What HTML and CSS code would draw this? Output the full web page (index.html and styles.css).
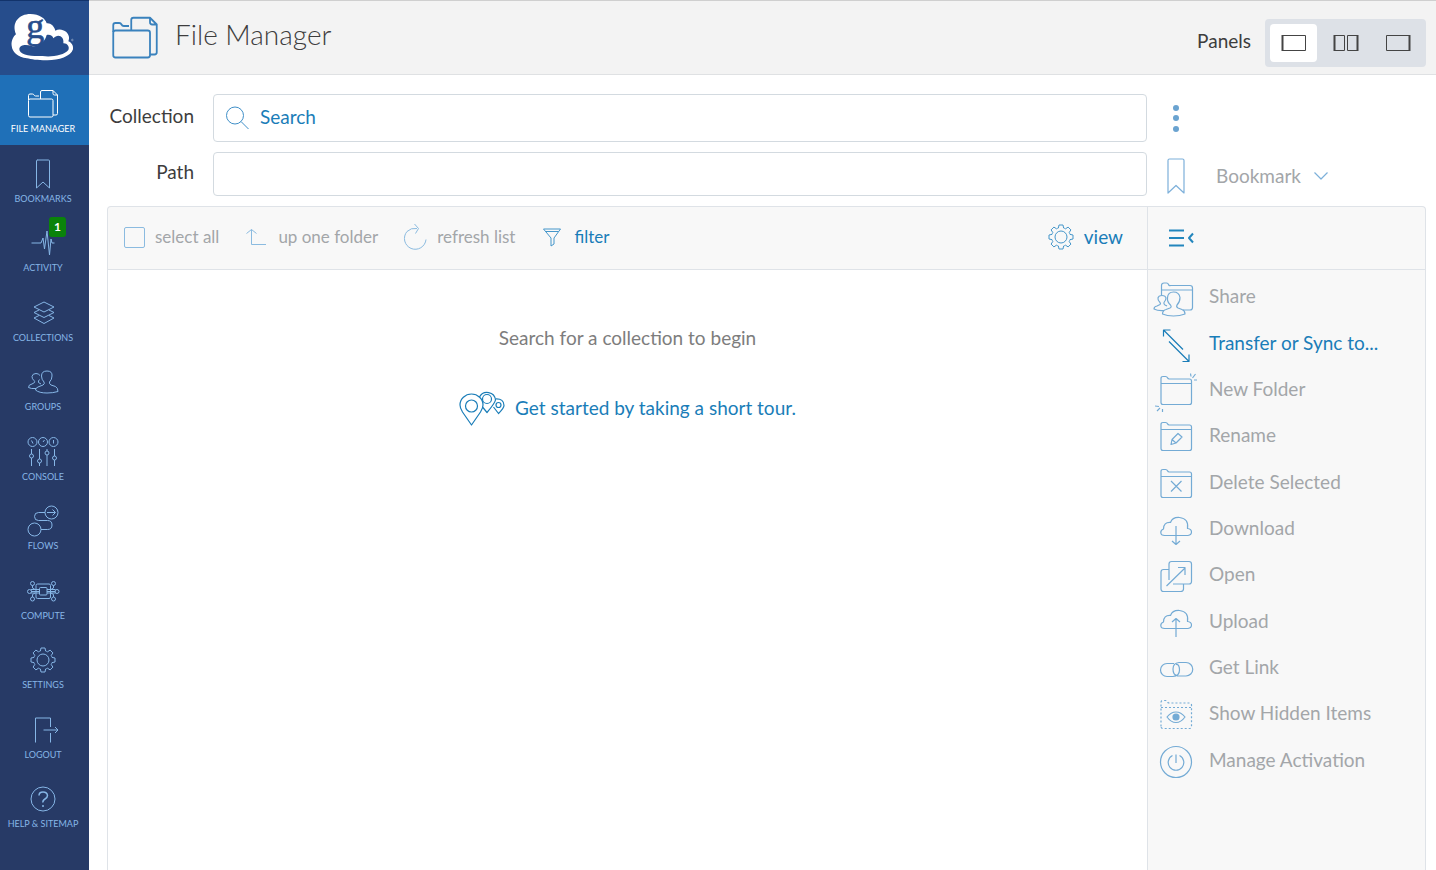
FILE: index.html
```html
<!DOCTYPE html>
<html lang="en">
<head>
    <meta charset="UTF-8">
    <meta name="viewport" content="width=device-width, initial-scale=1.0">
    <title>File Manager</title>
    <link rel="stylesheet" href="styles.css">
</head>
<body>
    <!-- Shared icons -->
    <svg class="sprite" aria-hidden="true">
        <symbol id="i-files" viewBox="0 0 36 36">
            <rect x="3.5" y="13" width="24.5" height="18" rx="1.5"/>
            <path d="M3.5 14V9.5Q3.5 8 5 8H7.500Q8.500 8 9 9T10.500 10H14M15.500 13V6Q15.500 4.500 17 4.500H28L32.500 9V27.500Q32.500 29 31 29H28M28 4.500V7.500Q28 9 29.500 9H32.500"/>
        </symbol>
        <symbol id="i-gear" viewBox="-13 -13 26 26">
            <path d="M-2.600-9L-2-12H2L2.600-9Q3.600-8.700 4.500-8.200L7.100-9.900 9.900-7.100 8.200-4.500Q8.700-3.600 9-2.600L12-2V2L9 2.600Q8.700 3.600 8.200 4.500L9.900 7.100 7.100 9.900 4.500 8.200Q3.600 8.700 2.600 9L2 12H-2L-2.600 9Q-3.600 8.700-4.500 8.200L-7.100 9.900-9.900 7.100-8.200 4.500Q-8.700 3.600-9 2.600L-12 2V-2L-9-2.600Q-8.700-3.600-8.200-4.500L-9.900-7.100-7.100-9.900-4.500-8.200Q-3.600-8.700-2.600-9Z"/>
            <circle r="6"/>
        </symbol>
        <symbol id="i-folder" viewBox="0 0 40 40">
            <path d="M5 31.500V7.500Q5 5.500 7 5.500H9.500Q11 5.500 11.500 6.800T13.500 8H33.500Q35.500 8 35.500 10V31.500Q35.500 33.500 33.500 33.500H7Q5 33.500 5 31.500ZM5 12.500H35.500"/>
        </symbol>
        <symbol id="i-cloud" viewBox="0 0 40 40">
            <path d="M9 25.500H32Q35.500 25 35.500 22T31.500 18.500Q33 8.500 23.500 7.500Q16.500 7 14.500 12.500Q7.500 12 7.500 19Q4.500 20 4.800 22.800T9 25.500Z"/>
        </symbol>
    </svg>

    <aside class="sidebar">
        <a class="logo" href="#" aria-label="Globus">
            <svg width="64" height="47" viewBox="0 0 192 141">
                <path fill="#fff" d="M2 95C0 80 8 66 15 61C0 25 25 0 58 0C85 0 104 14 107 28C118 26 130 36 133 50C140 46 150 46 156 49C172 54 178 70 172 82C182 86 188 96 186 106C180 128 140 140 105 139C80 139 60 136 48 133C20 128 4 115 2 95Z"/>
                <path fill="#264d8c" d="M25 105C26 92 45 90 62 96C82 100 102 84 107 63C118 61 125 66 127 73C140 58 160 66 157 88C168 87 177 98 172 108C160 124 120 130 95 126C60 128 24 122 25 105Z"/>
                <text x="46" y="73" class="logo-letter">g</text>
                <circle cx="184" cy="78" r="2.500" fill="none" stroke="#fff"/>
            </svg>
        </a>
        <nav class="nav">
            <a class="nav-item active" href="#">
                <svg class="nav-icon"><use href="#i-files"/></svg>
                <span>FILE MANAGER</span>
            </a>
            <a class="nav-item" href="#">
                <svg class="nav-icon" viewBox="0 0 36 36"><path d="M12 4H23.500Q24.500 4 24.500 5V32L18 26L11.500 32V5Q11.500 4 12.500 4"/></svg>
                <span>BOOKMARKS</span>
            </a>
            <a class="nav-item" href="#">
                <svg class="nav-icon" viewBox="0 0 36 36"><path d="M6.500 18H16L18 13L19.500 24L22 6L24.500 30L26 14L27 18H29.500"/></svg>
                <span>ACTIVITY</span>
                <b class="badge">1</b>
            </a>
            <a class="nav-item" href="#">
                <svg class="nav-icon" viewBox="0 0 36 36">
                    <path d="M19 7L29 12L19 17L9 12ZM14 15L9 17.500L19 22.500L29 17.500L24 15M14 20.500L9 23L19 28.500L29 23L24 20.500"/>
                </svg>
                <span>COLLECTIONS</span>
            </a>
            <a class="nav-item" href="#">
                <svg class="nav-icon" viewBox="0 0 36 36">
                    <path d="M10.500 26Q10.500 24 13 23L18 21Q20 20 19 18Q16.500 15.500 16.500 12Q16.500 7 22 7T27 12Q27 15.500 24.500 18Q24 20 26 21L30.500 22.500Q33 24 33 27.500Q28 29 22 29Q14 29 10.500 26Z"/>
                    <path d="M11 24.500Q6 25 3.500 23.500Q3.500 20.500 7 20L9.500 18.500Q10 17.500 9 16.500Q7 15 7 12.500Q7.500 9.500 11 9.500Q13.500 9.500 15 11.500M14.500 15.500Q13 17 13.500 18.500L16 20"/>
                </svg>
                <span>GROUPS</span>
            </a>
            <a class="nav-item" href="#">
                <svg class="nav-icon" viewBox="0 0 36 36">
                    <circle cx="7.500" cy="8" r="4.500"/><circle cx="18" cy="8" r="4.500"/><circle cx="28.500" cy="8" r="4.500"/>
                    <path d="M6.500 6.500L8 9.500M18 8L19.500 6M28.500 6V9.500M6.500 15V20M6.500 24V32M14.500 15V25M14.500 29V32M22 15V17M22 21V32M29.500 15V22M29.500 26V32"/>
                    <circle cx="6.500" cy="22" r="2"/><circle cx="14.500" cy="27" r="2"/><circle cx="22" cy="19" r="2"/><circle cx="29.500" cy="24" r="2"/>
                </svg>
                <span>CONSOLE</span>
            </a>
            <a class="nav-item" href="#">
                <svg class="nav-icon" viewBox="0 0 36 36">
                    <circle cx="9.500" cy="26.500" r="6.500"/><circle cx="26.500" cy="9.500" r="6.500"/>
                    <path d="M22 9.500H30M27.500 6.500L30.500 9.500L27.500 12.500M20 9.500H13.500Q9.500 9.500 9.500 13.500T13.500 17.500H22.500Q27 17.500 27 22T22.500 26.500H16"/>
                </svg>
                <span>FLOWS</span>
            </a>
            <a class="nav-item" href="#">
                <svg class="nav-icon" viewBox="0 0 36 36">
                    <rect x="11" y="11" width="14.500" height="14.500" rx="1.500"/><rect x="14.500" y="14.500" width="7.500" height="7.500" rx="1"/>
                    <path d="M6 16.500H14M6 18.500H14M6 20H14M22 16.500H30.500M22 18.500H30.500M22 20H30.500M7.500 12.500V15L10 16.500M7.500 24V21.500L10 20M28.500 12.500V15L26 16.500M28.500 24V21.500L26 20"/>
                    <circle cx="7.500" cy="10.500" r="2"/><circle cx="4.500" cy="18.500" r="2"/><circle cx="7.500" cy="26" r="2"/>
                    <circle cx="28.500" cy="10.500" r="2"/><circle cx="32" cy="18.500" r="2"/><circle cx="28.500" cy="26" r="2"/>
                </svg>
                <span>COMPUTE</span>
            </a>
            <a class="nav-item" href="#">
                <svg class="nav-icon" viewBox="-5 -5 36 36"><use href="#i-gear" width="26" height="26"/></svg>
                <span>SETTINGS</span>
            </a>
            <a class="nav-item" href="#">
                <svg class="nav-icon" viewBox="0 0 36 36"><path d="M10.500 30.500V6H25.500V15M25.500 21V30.500M18.500 18H33M30 15L33 18L30 21"/></svg>
                <span>LOGOUT</span>
            </a>
            <a class="nav-item" href="#">
                <svg class="nav-icon" viewBox="0 0 36 36">
                    <circle cx="18" cy="18" r="12"/>
                    <path stroke-width="1.500" d="M14 14.500Q14 11 18 11T22.500 14.500Q22.500 16.500 20 18T18 21.500M18 24V26"/>
                </svg>
                <span>HELP &amp; SITEMAP</span>
            </a>
        </nav>
    </aside>

    <div class="page">
        <header class="header">
            <svg class="title-icon"><use href="#i-files"/></svg>
            <h1>File Manager</h1>
            <span class="panels-label">Panels</span>
            <div class="panels">
                <button class="panel-btn selected" aria-label="Left panel">
                    <svg width="26" height="18" viewBox="0 0 26 18"><path d="M1.500 1.500H24.500V16.500H1.500Z"/><path class="thick" d="M1.500 1V17"/></svg>
                </button>
                <button class="panel-btn" aria-label="Two panels">
                    <svg width="26" height="18" viewBox="0 0 26 18"><path d="M1.500 1.500H11.500V16.500H1.500ZM14.500 1.500H24.500V16.500H14.500Z"/><path class="thick" d="M1.500 1V17M24.500 1V17"/></svg>
                </button>
                <button class="panel-btn" aria-label="Right panel">
                    <svg width="26" height="18" viewBox="0 0 26 18"><path d="M1.500 1.500H24.500V16.500H1.500Z"/><path class="thick" d="M24.500 1V17"/></svg>
                </button>
            </div>
        </header>

        <main class="main">
            <form class="location">
                <label for="collection">Collection</label>
                <div class="search">
                    <svg width="26" height="26" viewBox="0 0 26 26"><circle cx="11" cy="10.500" r="8.500"/><path d="M17 16.500L24.500 24"/></svg>
                    <input type="text" id="collection" placeholder="Search">
                </div>
                <button type="button" class="more" aria-label="Collection options">
                    <svg width="8" height="28" viewBox="0 0 8 28"><circle cx="4" cy="4" r="3"/><circle cx="4" cy="14" r="3"/><circle cx="4" cy="25" r="3"/></svg>
                </button>

                <label for="path">Path</label>
                <input type="text" id="path" class="path">
                <button type="button" class="bookmark">
                    <svg width="18" height="36" viewBox="0 0 18 36"><path d="M2.500 1H15.500Q17 1 17 2.500V35L9 27.500L1 35V2.500Q1 1 2.500 1Z"/></svg>
                    <span>Bookmark</span>
                    <svg width="16" height="10" viewBox="0 0 16 10"><path d="M1.500 1.500L8 8L14.500 1.500"/></svg>
                </button>
            </form>

            <div class="browser">
                <section class="files">
                    <div class="toolbar">
                        <label class="tool muted"><input type="checkbox"> select all</label>
                        <button class="tool muted">
                            <svg width="24" height="24" viewBox="0 0 24 24"><path d="M2.500 8.500L7.500 4.500L12.500 8.500M7.500 4.500V19.500H22"/></svg>
                            up one folder
                        </button>
                        <button class="tool muted">
                            <svg width="24" height="28" viewBox="0 0 24 28"><path d="M14 5.500Q8 4.500 4 8.500A10.800 10.800 0 1 0 23 16.500M11.500 1L15.500 5.500L12.500 10.500"/></svg>
                            refresh list
                        </button>
                        <button class="tool">
                            <svg width="24" height="24" viewBox="0 0 24 24"><path d="M3.500 4H20.500L14 13V19L11 21V13ZM5.500 6.500H18.500"/></svg>
                            filter
                        </button>
                        <button class="tool view">
                            <svg width="26" height="26"><use href="#i-gear"/></svg>
                            view
                        </button>
                    </div>
                    <div class="empty">
                        <p>Search for a collection to begin</p>
                        <a class="tour" href="#">
                            <svg width="46" height="36" viewBox="0 0 46 36">
                                <path d="M12.500 35L3.500 22Q1 18 1 15A11.500 11 0 0 1 24 15Q24 18 21.500 22Z"/><circle cx="12.500" cy="16" r="6"/>
                                <path d="M20.500 7A8.500 8.500 0 0 1 36.500 10Q36 13 28 22.500L23.500 17"/><circle cx="28" cy="9" r="4.500"/>
                                <path d="M36.500 9Q45 8.500 45 15.500Q45 18 39.500 23.500L34.500 17"/><circle cx="39.500" cy="15" r="2.500"/>
                            </svg>
                            <span>Get started by taking a short tour.</span>
                        </a>
                    </div>
                </section>

                <aside class="actions">
                    <div class="actions-head">
                        <button aria-label="Collapse actions">
                            <svg width="26" height="18" viewBox="0 0 26 18"><path d="M1 1.500H16M1 9H16M1 16.500H16"/><path d="M25 4.500L21 9L25 13.500"/></svg>
                        </button>
                    </div>
                    <ul>
                        <li><button class="action">
                            <svg viewBox="0 0 40 40">
                                <path d="M5.500 17V7.500Q5.500 5 8 5H10.500Q12 5 12.500 6.500T14.500 7.500H34Q36.500 7.500 36.500 10V29.500Q36.500 32 34 32H27M5.500 12H36.500"/>
                                <path class="cover" d="M6.500 36Q6.500 32.500 10 31.500L14 30Q16 29 14.500 27Q11 24 11.500 19.500Q12 14 17.500 14T24 19.500Q24 24 21 27Q20 29 22 30L26 31.500Q29 32.500 29 36Q24 38 17.500 38T6.500 36Z"/>
                                <path d="M8 32.500Q2 33 -2 31Q-2 28.500 1 28L4 26.500Q5 25.500 4 24.500Q1.500 22 2 20Q2.500 17.500 6 17.500T10 20Q10 22 8 24.500Q7.500 26 9 27L11 28"/>
                            </svg>
                            <span>Share</span>
                        </button></li>
                        <li><button class="action enabled">
                            <svg viewBox="0 0 40 40"><path d="M7.500 11.500V5H14.500M7.500 5L27 24.500M13 16.500L33 36.500M26.500 36.500H33V29.500"/></svg>
                            <span>Transfer or Sync to...</span>
                        </button></li>
                        <li><button class="action">
                            <svg viewBox="0 0 40 40"><use href="#i-folder"/><path d="M34.500 2.500L35 5.500M39.500 3L36.500 7M41 9H38M-1 35L3 35.500M1 40L4 37M6.500 41V38"/></svg>
                            <span>New Folder</span>
                        </button></li>
                        <li><button class="action">
                            <svg viewBox="0 0 40 40"><use href="#i-folder"/><path d="M15 27.500L16 22.500L22 16.500L26 20L20 26ZM16 22.500L20 26"/></svg>
                            <span>Rename</span>
                        </button></li>
                        <li><button class="action">
                            <svg viewBox="0 0 40 40"><use href="#i-folder"/><path d="M15 17L25.500 27.500M25.500 17L15 27.500"/></svg>
                            <span>Delete Selected</span>
                        </button></li>
                        <li><button class="action">
                            <svg viewBox="0 0 40 40"><use href="#i-cloud"/><path d="M20 16V34M16 31L20 34.500L24 31"/></svg>
                            <span>Download</span>
                        </button></li>
                        <li><button class="action">
                            <svg viewBox="0 0 40 40">
                                <path d="M13 13.500H7.500Q5 13.500 5 16V33Q5 35.500 7.500 35.500H24.500Q27.500 35.500 27.500 33V28"/>
                                <path d="M13 24V8Q13 5.500 15.500 5.500H33Q35.500 5.500 35.500 8V25.500Q35.500 28 33 28H17M10.500 30L29 12M22 11.500H29V19"/>
                            </svg>
                            <span>Open</span>
                        </button></li>
                        <li><button class="action">
                            <svg viewBox="0 0 40 40"><use href="#i-cloud"/><path d="M20 34V16M16 19L20 15.500L24 19"/></svg>
                            <span>Upload</span>
                        </button></li>
                        <li><button class="action">
                            <svg viewBox="0 0 40 40"><path d="M18 14.500H11A6.500 6.500 0 0 0 11 27.500H17Q23.500 27 23.500 21T20 15.500M21 27H30A6.500 6.500 0 0 0 30 13.500H23Q17 14 17 20T21 26.500M17 27.500H20"/></svg>
                            <span>Get Link</span>
                        </button></li>
                        <li><button class="action">
                            <svg viewBox="0 0 40 40">
                                <g class="dots"><use href="#i-folder"/></g>
                                <path d="M11 22Q15 17 20 17T29 22Q25 27.500 20 27.500T11 22Z"/><circle class="pupil" cx="20" cy="22" r="3"/>
                            </svg>
                            <span>Show Hidden Items</span>
                        </button></li>
                        <li><button class="action">
                            <svg viewBox="0 0 40 40"><circle cx="20" cy="20" r="15.500"/><path d="M20 12.500V21M16.500 13.500A7.800 7.800 0 1 0 23.500 13.500"/></svg>
                            <span>Manage Activation</span>
                        </button></li>
                    </ul>
                </aside>
            </div>
        </main>
    </div>
</body>
</html>
```
FILE: styles.css
```css
* {
    box-sizing: border-box;
}

body {
    display: flex;
    min-height: 100vh;
    margin: 0;
    font-family: Lato, "Open Sans", sans-serif;
    font-size: 19px;
    line-height: 24px;
    color: #3d3d3d;
    background-color: #fff;
}

button,
input {
    font: inherit;
    color: inherit;
}

button {
    padding: 0;
    border: none;
    background: none;
    cursor: pointer;
}

a {
    text-decoration: none;
}

svg {
    flex: none;
    fill: none;
    stroke: currentColor;
    stroke-linejoin: round;
    overflow: visible;
}

.sprite {
    position: absolute;
    width: 0;
    height: 0;
}

/* Left navigation */
.sidebar {
    display: flex;
    flex-direction: column;
    flex: none;
    width: 89px;
    padding-bottom: 30px;
    background-color: #273a66;
}

.logo {
    height: 75px;
    padding: 13px 0 0 11px;
    border-top: 1px solid #12336b;
    background-color: #264d8c;
}

.logo svg {
    display: block;
    stroke: none;
}

.logo-letter {
    font-family: "Liberation Serif", serif;
    font-size: 108px;
    fill: #264d8c;
    stroke: #264d8c;
    stroke-width: 2;
}

.nav {
    display: grid;
    grid-auto-rows: 1fr;
    flex: 1;
}

.nav-item {
    position: relative;
    display: flex;
    flex-direction: column;
    align-items: center;
    min-height: 64px;
    padding: 11px 3px 0 0;
    font-size: 9px;
    line-height: 13px;
    color: #86b6e6;
    white-space: nowrap;
}

.nav-item.active {
    color: #fff;
    background-color: #1f70b8;
}

.nav-icon {
    width: 36px;
    height: 36px;
}

.badge {
    position: absolute;
    top: 3px;
    left: 49px;
    width: 17px;
    border-radius: 3px;
    font-size: 12px;
    line-height: 20px;
    text-align: center;
    color: #fff;
    background-color: #0a830a;
}

/* Header */
.page {
    display: flex;
    flex-direction: column;
    flex: 1;
    min-width: 0;
}

.header {
    display: flex;
    align-items: center;
    height: 75px;
    padding: 0 10px 0 19px;
    border-top: 1px solid #cfcfcf;
    border-bottom: 1px solid #dfe1e3;
    background-color: #f3f3f3;
}

.title-icon {
    width: 54px;
    height: 54px;
    color: #3a82bd;
}

h1 {
    margin: 0 auto 8px 13px;
    font-size: 28px;
    font-weight: 300;
    line-height: 36px;
}

.panels-label {
    margin: 6px 14px 0 0;
}

.panels {
    display: flex;
    gap: 5px;
    padding: 5px;
    margin-top: 10px;
    border-radius: 4px;
    background-color: #dde1e7;
}

.panel-btn {
    display: grid;
    place-items: center;
    width: 47px;
    height: 38px;
    border-radius: 4px;
    color: #444;
}

.panel-btn.selected {
    background-color: #fff;
}

.thick {
    stroke-width: 2;
}

/* Collection and path */
.main {
    display: flex;
    flex-direction: column;
    flex: 1;
    padding: 19px 10px 0 18px;
}

.location {
    display: grid;
    grid-template-columns: 87px 1fr 260px;
    column-gap: 19px;
    row-gap: 10px;
    align-items: center;
    margin-bottom: 10px;
}

.location label {
    padding-bottom: 4px;
    text-align: right;
}

.search,
.path {
    width: 100%;
    height: 44px;
    border: 1px solid #d3dae0;
    border-radius: 4px;
    background-color: #fff;
}

.search {
    display: flex;
    align-items: center;
    gap: 10px;
    height: 48px;
    padding: 0 10px;
    color: #3f8fc8;
}

.search input {
    flex: 1;
    padding: 0 0 3px;
    border: none;
    outline: none;
    background: none;
}

.search input::placeholder {
    color: #1a7db8;
    opacity: 1;
}

.more {
    justify-self: start;
    margin-left: 6px;
    color: #6aa3d0;
}

.more svg {
    display: block;
    fill: currentColor;
    stroke: none;
}

.bookmark {
    display: flex;
    align-items: center;
    justify-self: start;
    gap: 12px;
    padding: 4px 0 0 1px;
    color: #a3a6a9;
}

.bookmark span {
    margin-left: 19px;
}

.bookmark svg {
    color: #7db0da;
}

/* File list */
.browser {
    display: flex;
    flex: 1;
    border: 1px solid #dfe3e8;
    border-bottom: none;
    border-radius: 4px 4px 0 0;
    background-color: #f8f8f8;
}

.files {
    display: flex;
    flex-direction: column;
    flex: 1;
}

.toolbar,
.actions-head {
    display: flex;
    align-items: center;
    height: 63px;
    border-bottom: 1px solid #dfe3e8;
}

.toolbar {
    gap: 25px;
    padding: 0 24px 2px 16px;
}

.tool {
    display: flex;
    align-items: center;
    gap: 10px;
    font-size: 17px;
    color: #1a7db8;
}

.tool svg {
    color: #4596ca;
}

.tool.muted {
    color: #a3a6a9;
}

.tool.muted svg {
    color: #8bbbe0;
}

.tool input {
    appearance: none;
    width: 21px;
    height: 21px;
    margin: 0;
    border: 1px solid #8bbbe0;
    border-radius: 2px;
}

.tool.view {
    margin-left: auto;
    font-size: 19px;
}

.empty {
    display: flex;
    flex-direction: column;
    align-items: center;
    gap: 40px;
    flex: 1;
    padding: 56px 0 0;
    color: #7d7d7d;
    background-color: #fff;
}

.empty p {
    margin: 0;
}

.tour {
    display: flex;
    align-items: center;
    gap: 10px;
    color: #1a7db8;
}

.title-icon,
.tour svg,
.bookmark svg,
.action svg {
    stroke-width: 1.2;
}

/* Actions */
.actions {
    width: 278px;
    border-left: 1px solid #dfe3e8;
}

.actions-head {
    padding: 0 0 1px 20px;
    color: #2386bd;
}

.actions-head svg {
    display: block;
    stroke-width: 2;
}

.actions ul {
    display: grid;
    grid-auto-rows: 1fr;
    min-height: 514px;
    margin: 0;
    padding: 4px 0 0;
    list-style: none;
}

.action {
    display: flex;
    align-items: center;
    gap: 13px;
    width: 100%;
    height: 100%;
    padding: 2px 0 0 8px;
    text-align: left;
    color: #a3a6a9;
}

.action svg {
    width: 40px;
    height: 40px;
    color: #74abd5;
}

.action span {
    padding-bottom: 4px;
}

.action.enabled,
.action.enabled svg {
    color: #1a7db8;
}

.cover {
    fill: #f8f8f8;
}

.dots {
    stroke-dasharray: 2 2;
}

.pupil {
    fill: currentColor;
}
```
